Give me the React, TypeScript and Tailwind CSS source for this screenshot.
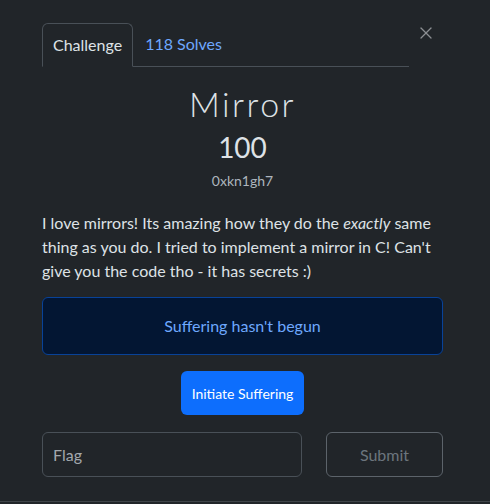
import { X } from "lucide-react";

export default function App() {
    return (
        <div
            className="h-[504px] w-[490px] overflow-hidden bg-[#212529] text-[#dee2e6]"
            style={{ fontFamily: "Lato, 'Liberation Sans', sans-serif" }}
        >
            <div className="flex h-[502px] flex-col border-b border-[#3f4449] pl-[42px] pr-[47px] pt-[23px]">
                {/* Tabs + close */}
                <div className="flex items-start">
                    <div className="flex w-[367px] border-b border-[#495057]">
                        <div className="-mb-px rounded-t-[6px] border border-b-[#212529] border-[#495057] px-[10px] py-[9px] text-[16px] leading-6 text-[#dee2e6]">
                            Challenge
                        </div>
                        <div className="px-[12px] py-[9px] text-[16px] leading-6 text-[#6ea8fe]">
                            118 Solves
                        </div>
                    </div>
                    <button className="ml-[7px] mt-0 flex h-[20px] w-[20px] items-center justify-center text-[#8b8e92]">
                        <X size={24} strokeWidth={1.5} />
                    </button>
                </div>

                {/* Title block */}
                <div className="mt-[17px] flex flex-col items-center">
                    <h2 className="text-[34px] font-light leading-[40px] tracking-[2.5px] text-[#dee2e6]">
                        Mirror
                    </h2>
                    <h3 className="mt-[6px] text-[28px] font-normal leading-[34px] text-[#dee2e6]">
                        100
                    </h3>
                    <div className="mt-[8px] text-[14px] leading-[18px] text-[#adb5bd]">0xkn1gh7</div>
                </div>

                {/* Description */}
                <p className="mt-[21px] text-[16px] leading-6 text-[#dee2e6]">
                    I love mirrors! Its amazing how they do the <em>exactly</em> same thing as you do. I
                    tried to implement a mirror in C! Can't give you the code tho - it has secrets :)
                </p>

                {/* Alert */}
                <div className="mt-[14px] rounded-[6px] border border-[#084298] bg-[#031633] py-4 text-center text-[16px] leading-6 text-[#6ea8fe]">
                    Suffering hasn't begun
                </div>

                {/* Action */}
                <div className="mt-[16px] flex justify-center">
                    <button className="h-[44px] rounded-[6px] bg-[#0d6efd] px-[11px] text-[14px] text-white">
                        Initiate Suffering
                    </button>
                </div>

                {/* Flag form */}
                <div className="mt-[17px] flex gap-[24px]">
                    <input
                        placeholder="Flag"
                        className="h-[45px] w-[260px] rounded-[6px] border border-[#495057] bg-[#212529] px-[10px] text-[16px] text-[#dee2e6] placeholder:text-[#a3a8ad] focus:outline-none"
                    />
                    <button className="h-[45px] flex-1 rounded-[6px] border border-[#5c636a] text-[16px] text-[#6c757d]">
                        Submit
                    </button>
                </div>
            </div>
        </div>
    );
}
